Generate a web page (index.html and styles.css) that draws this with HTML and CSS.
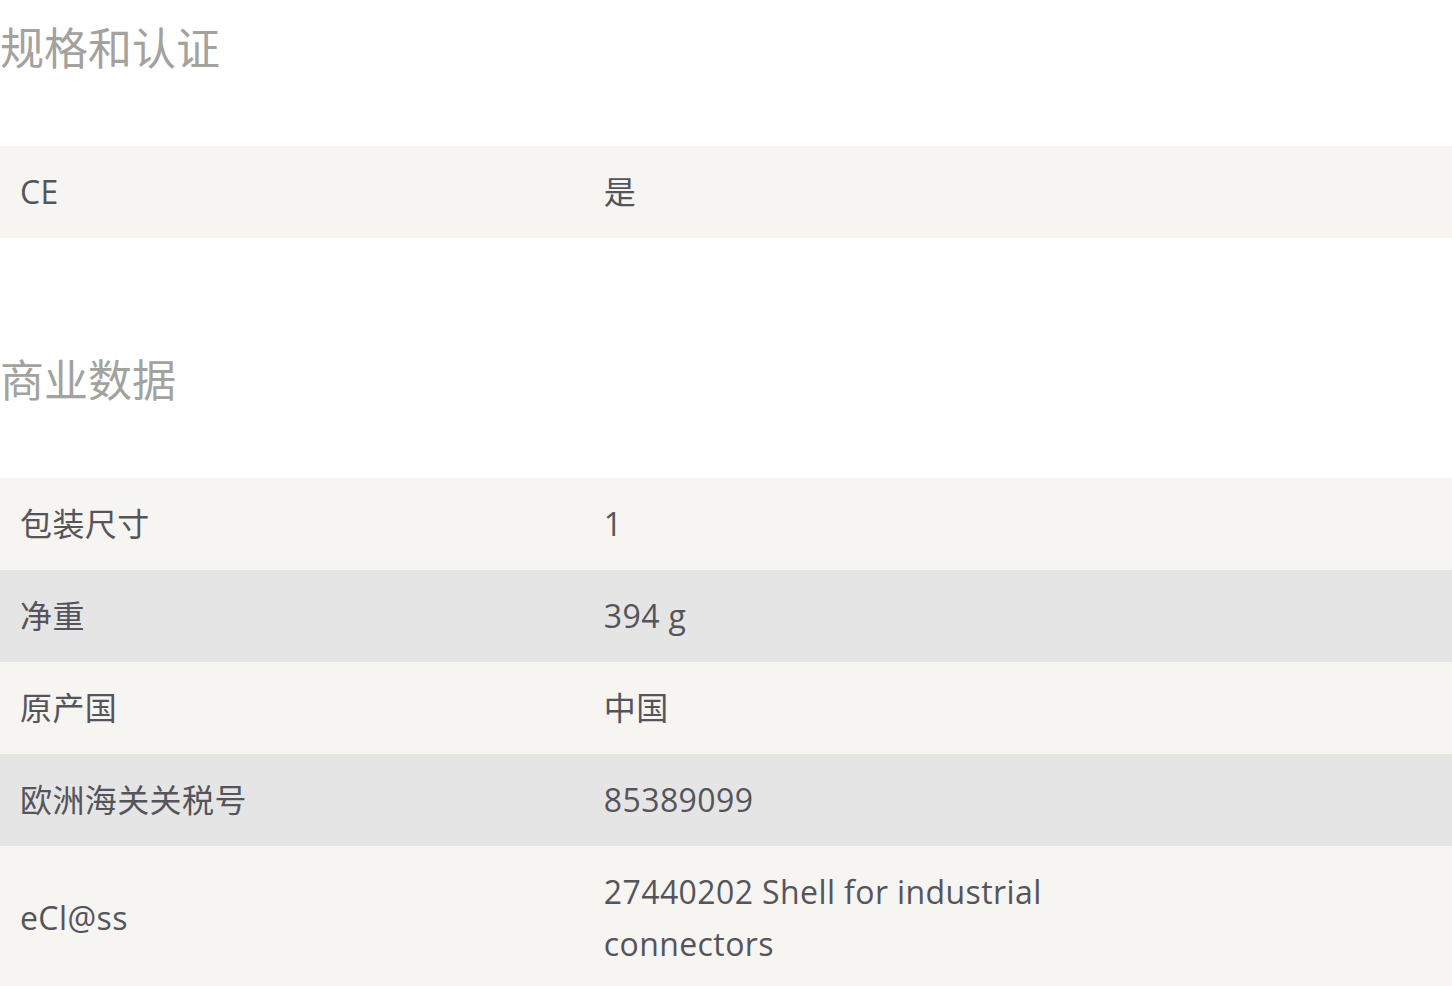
FILE: index.html
```html
<!DOCTYPE html>
<html lang="zh-CN">
<head>
<meta charset="utf-8">
<title>规格和认证</title>
<link rel="stylesheet" href="styles.css">
</head>
<body>
  <section class="section section-first">
    <h2 class="section-title">规格和认证</h2>
    <div class="spec-table">
      <div class="spec-row">
        <div class="spec-label">CE</div>
        <div class="spec-value">是</div>
      </div>
    </div>
  </section>
  <section class="section">
    <h2 class="section-title">商业数据</h2>
    <div class="spec-table">
      <div class="spec-row">
        <div class="spec-label">包装尺寸</div>
        <div class="spec-value">1</div>
      </div>
      <div class="spec-row">
        <div class="spec-label">净重</div>
        <div class="spec-value">394 g</div>
      </div>
      <div class="spec-row">
        <div class="spec-label">原产国</div>
        <div class="spec-value">中国</div>
      </div>
      <div class="spec-row">
        <div class="spec-label">欧洲海关关税号</div>
        <div class="spec-value">85389099</div>
      </div>
      <div class="spec-row">
        <div class="spec-label">eCl@ss</div>
        <div class="spec-value">27440202 Shell for industrial connectors</div>
      </div>
    </div>
  </section>
</body>
</html>
```

FILE: styles.css
```css
html, body {
  margin: 0;
  padding: 0;
  background: #ffffff;
}

body {
  font-family: "Open Sans", "Noto Sans CJK SC", sans-serif;
  color: #55545b;
}

.section {
  padding-top: 110px;
}

.section-first {
  padding-top: 16px;
}

.section-title {
  margin: 0 0 70px 0;
  font-family: "Noto Sans CJK SC", sans-serif;
  font-size: 44px;
  font-weight: 400;
  line-height: 60px;
  color: #a3a29e;
}

.spec-table {
  display: flex;
  flex-direction: column;
}

.spec-row {
  display: grid;
  grid-template-columns: 40% 40% 20%;
  align-items: center;
  background: #f6f5f2;
}

.spec-row:nth-child(even) {
  background: #e5e5e5;
}

.spec-label,
.spec-value {
  padding: 20px;
  font-size: 32px;
  line-height: 52px;
  letter-spacing: 0.4px;
}

.spec-value {
  padding-left: 23px;
}
```
